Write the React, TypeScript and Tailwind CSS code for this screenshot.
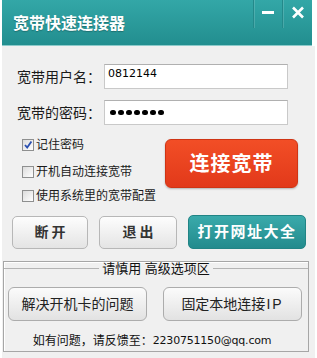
import React from "react";

function CheckBox({ checked }: { checked?: boolean }) {
  return (
    <div className="w-[12px] h-[12px] border border-[#8e8f8f] bg-gradient-to-br from-[#dcdcdc] to-[#ffffff] flex items-center justify-center shrink-0">
      {checked && (
        <svg width="10" height="10" viewBox="0 0 10 10">
          <path d="M2 5 L4.2 7.6 L8.4 1.6" stroke="#2a4fb0" strokeWidth="1.8" fill="none" />
        </svg>
      )}
    </div>
  );
}

export default function App() {
  const font = "font-['Liberation_Sans','Noto_Sans_CJK_SC',sans-serif]";
  return (
    <div className={`w-[317px] h-[358px] bg-white overflow-hidden ${font}`}>
      {/* Title bar */}
      <div className="ml-[2px] w-[310px] h-[46px] bg-gradient-to-b from-[#33a7a7] to-[#228e8f] border-b border-[#8ccaca] flex justify-between">
        <div className="pl-[11px] pt-[13px] text-white text-[16px] font-bold leading-[22px] [text-shadow:0_1px_1px_rgba(0,0,0,0.25)]">
          宽带快速连接器
        </div>
        <div className="flex h-[28px]">
          <div className="w-[29px] h-full border-l border-[#24898a] shadow-[inset_1px_0_0_rgba(255,255,255,0.15)] flex items-start justify-center pt-[11px]">
            <div className="w-[12px] h-[3px] bg-white" />
          </div>
          <div className="w-[30px] h-full border-l border-[#24898a] shadow-[inset_1px_0_0_rgba(255,255,255,0.15)] flex items-start justify-center pt-[6px]">
            <svg width="14" height="13" viewBox="0 0 14 13">
              <path d="M2 1.5 L12 11.5 M12 1.5 L2 11.5" stroke="white" strokeWidth="2.6" />
            </svg>
          </div>
        </div>
      </div>

      {/* Body */}
      <div className="ml-[2px] w-[313px] h-[312px] bg-[#f0f0f0] pt-[18px]">
        {/* Username */}
        <div className="flex items-center pl-[15px] h-[25px]">
          <div className="w-[87px] text-[14px] text-[#1a1a1a] leading-[20px]">宽带用户名：</div>
          <div className="w-[184px] h-[25px] bg-white border border-[#c9c9c9] border-t-[#b0b0b0] pl-[3px] pt-[1px] text-[11px] leading-[15px] text-black font-['DejaVu_Sans',sans-serif]">
            0812144
          </div>
        </div>
        {/* Password */}
        <div className="flex items-center pl-[15px] h-[25px] mt-[11px]">
          <div className="w-[87px] text-[14px] text-[#1a1a1a] leading-[20px]">宽带的密码：</div>
          <div className="w-[184px] h-[25px] bg-white border border-[#c9c9c9] border-t-[#b0b0b0] pl-[5px] flex items-center gap-[2.5px]">
            {[0, 1, 2, 3, 4, 5, 6].map((i) => (
              <div key={i} className="w-[5.5px] h-[5.5px] rounded-full bg-black" />
            ))}
          </div>
        </div>

        {/* Middle section */}
        <div className="flex h-[90px]">
          <div className="w-[143px] ml-[20px] pt-[8px] flex flex-col text-[12px] text-[#1a1a1a]">
            <div className="h-[24px] flex items-center gap-[2px]">
              <CheckBox checked />
              <span className="leading-[16px]">记住密码</span>
            </div>
            <div className="h-[24px] mt-[3px] flex items-center gap-[2px]">
              <CheckBox />
              <span className="leading-[16px]">开机自动连接宽带</span>
            </div>
            <div className="h-[24px] flex items-center gap-[2px]">
              <CheckBox />
              <span className="leading-[16px]">使用系统里的宽带配置</span>
            </div>
          </div>
          <div className="mt-[14px] w-[133px] h-[49px] rounded-[6px] bg-gradient-to-b from-[#f24e26] to-[#e2391a] border border-[#cf3414] shadow-[0_1px_2px_rgba(0,0,0,0.25)] flex items-center justify-center text-white text-[20px] font-bold tracking-[1px]">
            连接宽带
          </div>
        </div>

        {/* Buttons row */}
        <div className="flex items-center pl-[10px] h-[34px]">
          <div className="w-[76px] h-[33px] rounded-[5px] border border-[#b7b7b7] bg-gradient-to-b from-[#fdfdfd] to-[#e4e4e4] flex items-center justify-center text-[14px] font-bold text-[#333] tracking-[3px] pl-[3px]">
            断开
          </div>
          <div className="ml-[11px] w-[78px] h-[33px] rounded-[5px] border border-[#b7b7b7] bg-gradient-to-b from-[#fdfdfd] to-[#e4e4e4] flex items-center justify-center text-[14px] font-bold text-[#333] tracking-[3px] pl-[3px]">
            退出
          </div>
          <div className="ml-[11px] w-[118px] h-[34px] rounded-[5px] bg-gradient-to-b from-[#3aaaab] to-[#228b8d] border border-[#218485] flex items-center justify-center text-[15px] font-bold text-white tracking-[1.5px]">
            打开网址大全
          </div>
        </div>

        {/* Advanced frame */}
        <div className="mt-[12px] ml-[1px] w-[306px] h-[91px] border border-[#a6a6a6] shadow-[inset_1px_1px_0_#ffffff]">
          <div className="h-[13px] flex items-center">
            <div className="flex-1 h-[1px] bg-[#b4b4b4]" />
            <div className="px-[3px] text-[13px] leading-[14px] text-[#111]">请慎用 高级选项区</div>
            <div className="flex-1 h-[1px] bg-[#b4b4b4]" />
          </div>
          <div className="mt-[12px] flex pl-[4px] gap-[16px]">
            <div className="w-[139px] h-[34px] rounded-[6px] border border-[#acacac] bg-gradient-to-b from-[#fbfbfb] to-[#e2e2e2] flex items-center justify-center text-[14px] text-[#222]">
              解决开机卡的问题
            </div>
            <div className="w-[139px] h-[34px] rounded-[6px] border border-[#acacac] bg-gradient-to-b from-[#fbfbfb] to-[#e2e2e2] flex items-center justify-center text-[14px] text-[#222]">
              固定本地连接<span className="tracking-[2px] ml-[1px]">IP</span>
            </div>
          </div>
          <div className="mt-[13px] flex justify-center pr-[8px] text-[12px] leading-[14px] text-[#111]">
            <span>如有问题，请反馈至：</span>
            <span className="font-['DejaVu_Sans',sans-serif] text-[11px] tracking-[-0.2px]">2230751150@qq.com</span>
          </div>
        </div>
      </div>
    </div>
  );
}
